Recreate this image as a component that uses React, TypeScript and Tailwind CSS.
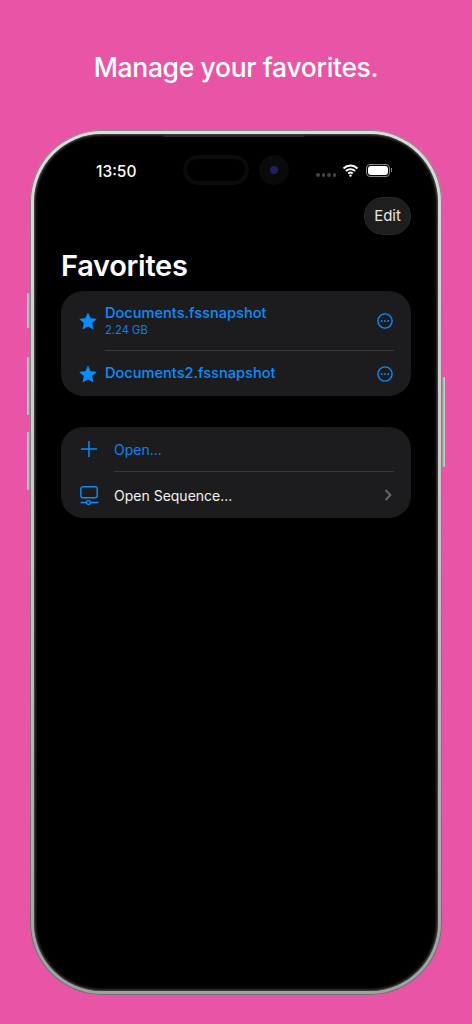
const font = { fontFamily: "Inter, 'Liberation Sans', sans-serif" };

function StarIcon() {
  return (
    <svg width="18" height="18" viewBox="0 0 24 24" className="shrink-0">
      <path
        d="M12 1.6l3.1 7.2 7.8.8-5.9 5.2 1.7 7.7-6.7-4-6.7 4 1.7-7.7-5.9-5.2 7.8-.8z"
        fill="#0a8dff"
        stroke="#0a8dff"
        strokeLinejoin="round"
      />
    </svg>
  );
}

function MoreIcon() {
  return (
    <svg width="16" height="16" viewBox="0 0 16 16" className="shrink-0">
      <circle cx="8" cy="8" r="7.1" fill="none" stroke="#0a8dff" strokeWidth="1.4" />
      <circle cx="4.8" cy="8" r="0.9" fill="#0a8dff" />
      <circle cx="8" cy="8" r="0.9" fill="#0a8dff" />
      <circle cx="11.2" cy="8" r="0.9" fill="#0a8dff" />
    </svg>
  );
}

function PlusIcon() {
  return (
    <svg width="18" height="18" viewBox="0 0 18 18" className="shrink-0" fill="none" stroke="#0a8dff" strokeWidth="1.5">
      <path d="M9 1v16M1 9h16" />
    </svg>
  );
}

function SequenceIcon() {
  return (
    <svg width="19" height="19" viewBox="0 0 19 19" className="shrink-0" fill="none" stroke="#0a8dff" strokeWidth="1.4">
      <rect x="0.8" y="0.8" width="16.4" height="11" rx="2" />
      <path d="M0.6 16.5h5.8M10.6 16.5h7.8" />
      <circle cx="8.5" cy="16.5" r="1.9" />
    </svg>
  );
}

function StatusBar() {
  return (
    <div className="flex h-[36px] items-center pl-[62px]">
      <span className="w-[87px] pt-[3px] text-[15.5px] font-medium text-white">13:50</span>
      <div className="h-[30px] w-[66px] rounded-full border-[4px] border-[#0b0b0b]" />
      <div className="ml-[10px] flex h-[30px] w-[30px] items-center justify-center rounded-full bg-[#0a0a0a]">
        <div className="h-[8px] w-[8px] rounded-full bg-[#20205a]" />
      </div>
      <div className="mt-[10px] ml-[27px] flex gap-[2px]">
        <i className="h-[3.5px] w-[3.5px] rounded-full bg-[#444]" />
        <i className="h-[3.5px] w-[3.5px] rounded-full bg-[#444]" />
        <i className="h-[3.5px] w-[3.5px] rounded-full bg-[#444]" />
        <i className="h-[3.5px] w-[3.5px] rounded-full bg-[#444]" />
      </div>
      <svg width="17" height="13" viewBox="0 0 16 13" className="ml-[6px]" fill="none" stroke="#fff" strokeWidth="2">
        <path d="M1 4.4c4-3.8 10-3.8 14 0M3.4 7c2.7-2.5 6.5-2.5 9.2 0M5.8 9.5c1.3-1.1 3.1-1.1 4.4 0" />
        <circle cx="8" cy="11.6" r="1.2" fill="#fff" stroke="none" />
      </svg>
      <div className="ml-[7px] flex items-center gap-[1px]">
        <div className="h-[13px] w-[24px] rounded-[4px] border border-[#888] p-[1px]">
          <div className="h-full w-full rounded-[3px] bg-white" />
        </div>
        <div className="h-[4px] w-[1px] bg-[#888]" />
      </div>
    </div>
  );
}

export default function App() {
  return (
    <div className="relative h-[1024px] w-[472px] overflow-hidden bg-[#e855a6] pt-[48px]" style={font}>
      <h1 className="h-[38px] text-center text-[26.5px] leading-[38px] font-medium tracking-[-0.35px] text-white">
        Manage your favorites.
      </h1>

      {/* side buttons */}
      <div className="absolute top-[293px] left-[27px] h-[35px] w-[4px] rounded-l-[1px] bg-gradient-to-r from-[#d8d8d8] to-[#777]" />
      <div className="absolute top-[357px] left-[27px] h-[58px] w-[4px] rounded-l-[1px] bg-gradient-to-r from-[#d8d8d8] to-[#777]" />
      <div className="absolute top-[432px] left-[27px] h-[58px] w-[4px] rounded-l-[1px] bg-gradient-to-r from-[#d8d8d8] to-[#777]" />
      <div className="absolute top-[377px] left-[441px] h-[90px] w-[4px] rounded-r-[1px] bg-gradient-to-l from-[#d8d8d8] to-[#777]" />

      <div className="relative mx-auto mt-[44px] h-[865px] w-[412px] rounded-[72px] bg-gradient-to-b from-[#dcdcdc] via-[#c4c4c4] to-[#a0a0a0] p-[4px] shadow-[inset_0_0_0_1px_rgba(70,70,70,0.55)]">
        <div className="h-full rounded-[68px] bg-black pt-[18px] shadow-[inset_0_0_3px_1px_rgba(170,170,170,0.55)]">
          <div className="absolute top-[5px] left-[133px] h-[2px] w-[142px] rounded-b-[2px] bg-[#2c2c2c]" />
          <StatusBar />

          <div className="mt-[9px] flex justify-end pr-[27px]">
            <div className="flex h-[38px] w-[47px] items-center justify-center rounded-[19px] border border-[#2a2a2a] bg-[#1e1e1f] pt-[1px] text-[15px] text-[#e6e6e6]">
              Edit
            </div>
          </div>

          <div className="mt-[11px] pl-[27px] text-[29px] leading-[40px] font-semibold tracking-[-0.3px] text-white">
            Favorites
          </div>

          <div className="mx-[27px] mt-[5px] rounded-[22px] bg-[#1c1c1e]">
            <div className="flex h-[59px] items-center pr-[18px] pl-[18px]">
              <StarIcon />
              <div className="ml-[8px] flex-1">
                <div className="text-[14.6px] leading-[19px] font-medium text-[#0a8dff]">Documents.fssnapshot</div>
                <div className="text-[11.2px] leading-[15px] text-[#0a80e6]">2.24 GB</div>
              </div>
              <MoreIcon />
            </div>
            <div className="mr-[17px] ml-[44px] h-px bg-[#38383a]" />
            <div className="flex h-[45px] items-center pr-[18px] pl-[18px]">
              <StarIcon />
              <div className="ml-[8px] flex-1 text-[14.6px] font-medium text-[#0a8dff]">Documents2.fssnapshot</div>
              <MoreIcon />
            </div>
          </div>

          <div className="mx-[27px] mt-[31px] rounded-[22px] bg-[#1c1c1e]">
            <div className="flex h-[44px] items-center pl-[19px]">
              <PlusIcon />
              <span className="ml-[16px] pt-[1px] text-[14px] text-[#0a84f0]">Open...</span>
            </div>
            <div className="mr-[17px] ml-[53px] h-px bg-[#38383a]" />
            <div className="flex h-[46px] items-center pr-[19px] pl-[19px]">
              <SequenceIcon />
              <span className="ml-[15px] flex-1 pt-[1px] text-[14px] text-[#f2f2f2]">Open Sequence...</span>
              <svg width="8" height="12" viewBox="0 0 8 12" fill="none" stroke="#6a6a6e" strokeWidth="1.8">
                <path d="M1.5 1l5 5-5 5" />
              </svg>
            </div>
          </div>
        </div>
      </div>
    </div>
  );
}
